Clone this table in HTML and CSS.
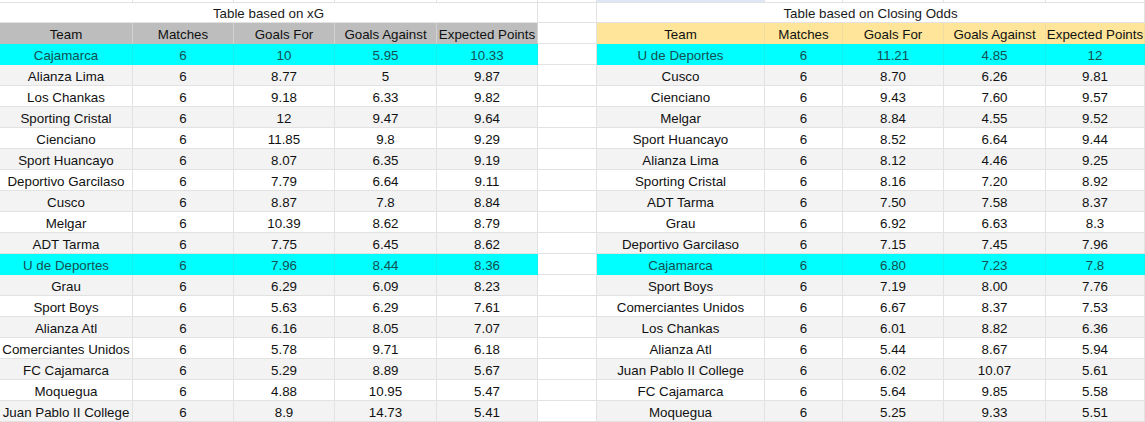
FILE: index.html
```html
<!DOCTYPE html>
<html>
<head>
<meta charset="utf-8">
<link rel="stylesheet" href="styles.css">
</head>
<body>
<div class="sheet">
  <div class="row top"><div></div><div></div><div></div><div></div><div></div><div></div><div class="sel"></div><div></div><div></div><div></div><div></div></div>
  <div class="row title"><div class="merge">Table based on xG</div><div></div><div class="merge">Table based on Closing Odds</div></div>
  <div class="row head"><div class="hl">Team</div><div class="hl">Matches</div><div class="hl">Goals For</div><div class="hl">Goals Against</div><div class="hl">Expected Points</div><div></div><div class="hr">Team</div><div class="hr">Matches</div><div class="hr">Goals For</div><div class="hr">Goals Against</div><div class="hr">Expected Points</div></div>

  <div class="row hi"><div>Cajamarca</div><div>6</div><div>10</div><div>5.95</div><div>10.33</div><div class="gap"></div><div>U de Deportes</div><div>6</div><div>11.21</div><div>4.85</div><div>12</div></div>
  <div class="row alt"><div>Alianza Lima</div><div>6</div><div>8.77</div><div>5</div><div>9.87</div><div class="gap"></div><div>Cusco</div><div>6</div><div>8.70</div><div>6.26</div><div>9.81</div></div>
  <div class="row"><div>Los Chankas</div><div>6</div><div>9.18</div><div>6.33</div><div>9.82</div><div class="gap"></div><div>Cienciano</div><div>6</div><div>9.43</div><div>7.60</div><div>9.57</div></div>
  <div class="row alt"><div>Sporting Cristal</div><div>6</div><div>12</div><div>9.47</div><div>9.64</div><div class="gap"></div><div>Melgar</div><div>6</div><div>8.84</div><div>4.55</div><div>9.52</div></div>
  <div class="row"><div>Cienciano</div><div>6</div><div>11.85</div><div>9.8</div><div>9.29</div><div class="gap"></div><div>Sport Huancayo</div><div>6</div><div>8.52</div><div>6.64</div><div>9.44</div></div>
  <div class="row alt"><div>Sport Huancayo</div><div>6</div><div>8.07</div><div>6.35</div><div>9.19</div><div class="gap"></div><div>Alianza Lima</div><div>6</div><div>8.12</div><div>4.46</div><div>9.25</div></div>
  <div class="row"><div>Deportivo Garcilaso</div><div>6</div><div>7.79</div><div>6.64</div><div>9.11</div><div class="gap"></div><div>Sporting Cristal</div><div>6</div><div>8.16</div><div>7.20</div><div>8.92</div></div>
  <div class="row alt"><div>Cusco</div><div>6</div><div>8.87</div><div>7.8</div><div>8.84</div><div class="gap"></div><div>ADT Tarma</div><div>6</div><div>7.50</div><div>7.58</div><div>8.37</div></div>
  <div class="row"><div>Melgar</div><div>6</div><div>10.39</div><div>8.62</div><div>8.79</div><div class="gap"></div><div>Grau</div><div>6</div><div>6.92</div><div>6.63</div><div>8.3</div></div>
  <div class="row alt"><div>ADT Tarma</div><div>6</div><div>7.75</div><div>6.45</div><div>8.62</div><div class="gap"></div><div>Deportivo Garcilaso</div><div>6</div><div>7.15</div><div>7.45</div><div>7.96</div></div>
  <div class="row hi"><div>U de Deportes</div><div>6</div><div>7.96</div><div>8.44</div><div>8.36</div><div class="gap"></div><div>Cajamarca</div><div>6</div><div>6.80</div><div>7.23</div><div>7.8</div></div>
  <div class="row alt"><div>Grau</div><div>6</div><div>6.29</div><div>6.09</div><div>8.23</div><div class="gap"></div><div>Sport Boys</div><div>6</div><div>7.19</div><div>8.00</div><div>7.76</div></div>
  <div class="row"><div>Sport Boys</div><div>6</div><div>5.63</div><div>6.29</div><div>7.61</div><div class="gap"></div><div>Comerciantes Unidos</div><div>6</div><div>6.67</div><div>8.37</div><div>7.53</div></div>
  <div class="row alt"><div>Alianza Atl</div><div>6</div><div>6.16</div><div>8.05</div><div>7.07</div><div class="gap"></div><div>Los Chankas</div><div>6</div><div>6.01</div><div>8.82</div><div>6.36</div></div>
  <div class="row"><div>Comerciantes Unidos</div><div>6</div><div>5.78</div><div>9.71</div><div>6.18</div><div class="gap"></div><div>Alianza Atl</div><div>6</div><div>5.44</div><div>8.67</div><div>5.94</div></div>
  <div class="row alt"><div>FC Cajamarca</div><div>6</div><div>5.29</div><div>8.89</div><div>5.67</div><div class="gap"></div><div>Juan Pablo II College</div><div>6</div><div>6.02</div><div>10.07</div><div>5.61</div></div>
  <div class="row"><div>Moquegua</div><div>6</div><div>4.88</div><div>10.95</div><div>5.47</div><div class="gap"></div><div>FC Cajamarca</div><div>6</div><div>5.64</div><div>9.85</div><div>5.58</div></div>
  <div class="row alt"><div>Juan Pablo II College</div><div>6</div><div>8.9</div><div>14.73</div><div>5.41</div><div class="gap"></div><div>Moquegua</div><div>6</div><div>5.25</div><div>9.33</div><div>5.51</div></div>
</div>
</body>
</html>
```

FILE: styles.css
```css
html, body {
  margin: 0;
  padding: 0;
  background: #ffffff;
}

.sheet {
  width: 1145px;
  height: 422px;
  overflow: hidden;
  font-family: "Liberation Sans", Arial, sans-serif;
  font-size: 13.33px;
  color: #111111;
}

.row {
  display: grid;
  grid-template-columns: 133px 101px 101px 102px 101px 59px 168px 78px 101px 102px 99px;
  height: 21px;
}

.row > div {
  box-sizing: border-box;
  border-right: 1px solid #e2e2e2;
  border-bottom: 1px solid #e2e2e2;
  text-align: center;
  line-height: 19px;
  padding-top: 2px;
  white-space: nowrap;
  overflow: hidden;
}

.row.top {
  height: 3px;
}

.row.top > div {
  line-height: 2px;
  padding-top: 0;
}

.row.top .sel {
  background: #dfe7f7;
}

.row.title {
  height: 20px;
  grid-template-columns: 538px 59px 548px;
}

.row.title > div {
  line-height: 19px;
  padding-top: 1px;
  color: #1a1a1a;
}

.row.head .hl {
  background: #bdbdbd;
  border-right-color: #d2d2d2;
  border-bottom-color: #bdbdbd;
}

.row.head .hr {
  background: #ffe599;
  border-right-color: #f0dca0;
  border-bottom-color: #ffe599;
}

.row.alt > div {
  background: #f3f3f3;
}

.row.hi > div {
  background: #00ffff;
  color: #154f52;
  border-right-color: #12f0f0;
  border-bottom-color: #00ffff;
}

.row > div.gap {
  background: #ffffff;
  border-bottom-color: #e2e2e2;
  border-right-color: #e2e2e2;
}
```
